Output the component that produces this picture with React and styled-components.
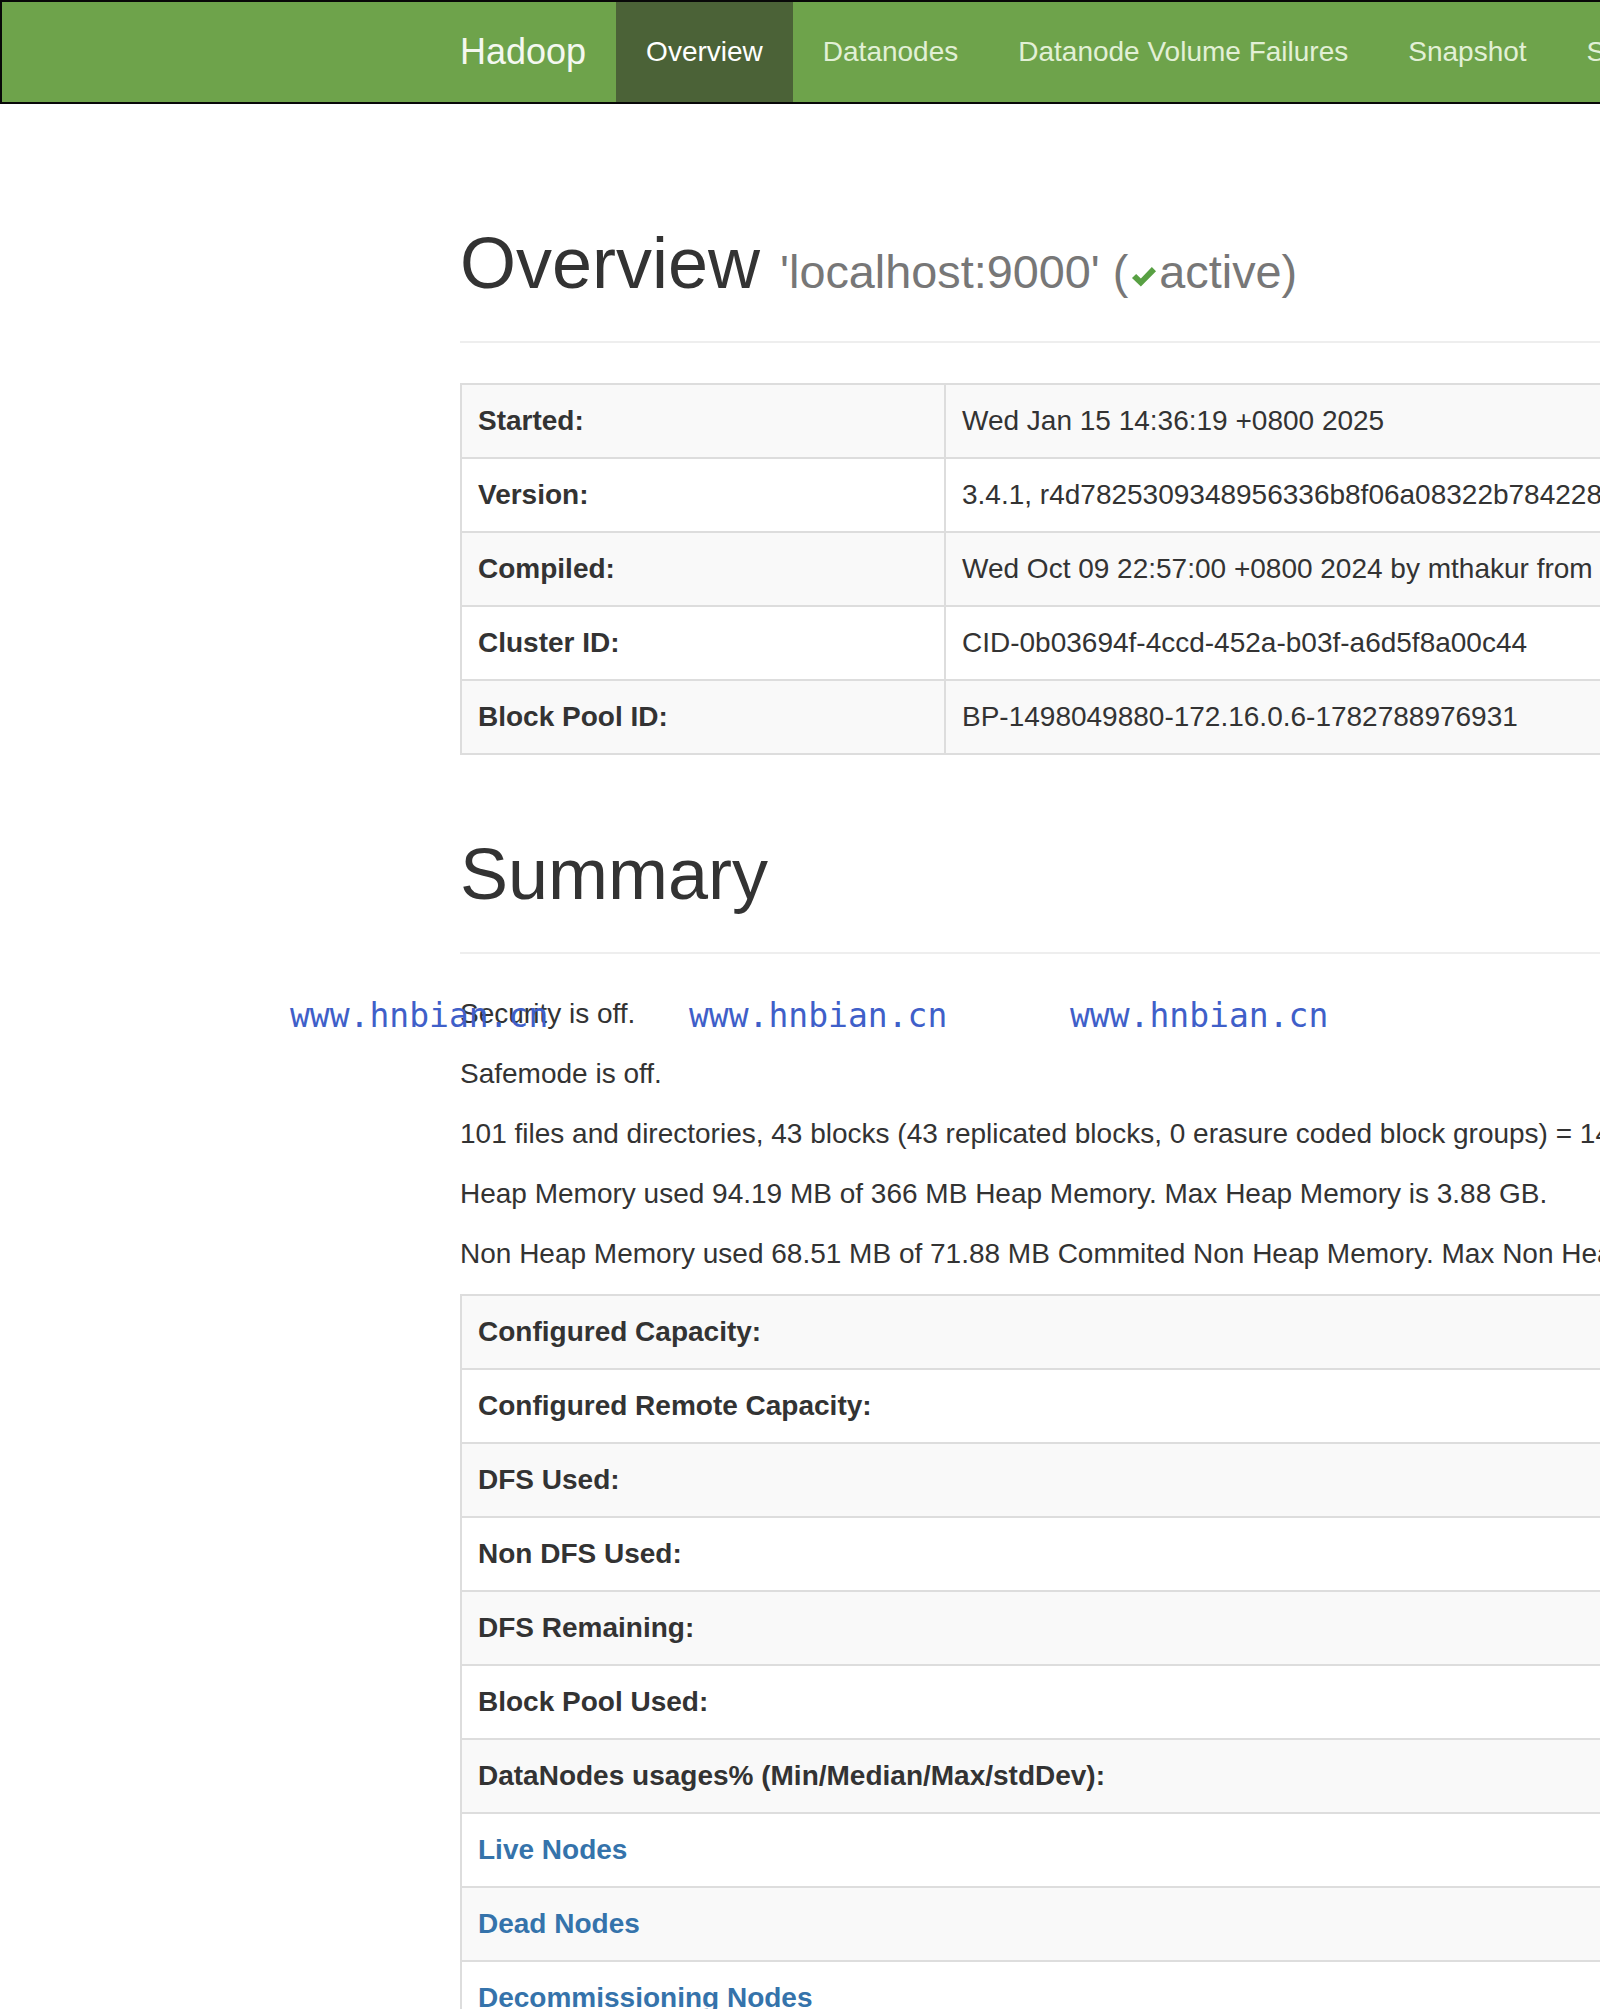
import React from "react";
import styled, { createGlobalStyle } from "styled-components";

const GlobalStyle = createGlobalStyle`
  html, body {
    margin: 0;
    padding: 0;
    background: #fff;
    overflow: hidden;
  }
  body {
    font-family: "Liberation Sans", Helvetica, Arial, sans-serif;
    font-size: 28px;
    line-height: 40px;
    color: #333;
  }
  * {
    box-sizing: border-box;
  }
`;

const navItems = [
  "Overview",
  "Datanodes",
  "Datanode Volume Failures",
  "Snapshot",
  "Startup Progress",
  "Utilities",
];

const overviewRows = [
  ["Started:", "Wed Jan 15 14:36:19 +0800 2025"],
  ["Version:", "3.4.1, r4d7825309348956336b8f06a08322b78422849b1"],
  ["Compiled:", "Wed Oct 09 22:57:00 +0800 2024 by mthakur from branch-3.4.1"],
  ["Cluster ID:", "CID-0b03694f-4ccd-452a-b03f-a6d5f8a00c44"],
  ["Block Pool ID:", "BP-1498049880-172.16.0.6-1782788976931"],
];

const summaryLines = [
  "Security is off.",
  "Safemode is off.",
  "101 files and directories, 43 blocks (43 replicated blocks, 0 erasure coded block groups) = 144 total filesystem object(s).",
  "Heap Memory used 94.19 MB of 366 MB Heap Memory. Max Heap Memory is 3.88 GB.",
  "Non Heap Memory used 68.51 MB of 71.88 MB Commited Non Heap Memory. Max Non Heap Memory is <unbounded>.",
];

const summaryRows = [
  { label: "Configured Capacity:" },
  { label: "Configured Remote Capacity:" },
  { label: "DFS Used:" },
  { label: "Non DFS Used:" },
  { label: "DFS Remaining:" },
  { label: "Block Pool Used:" },
  { label: "DataNodes usages% (Min/Median/Max/stdDev):" },
  { label: "Live Nodes", link: true },
  { label: "Dead Nodes", link: true },
  { label: "Decommissioning Nodes", link: true },
  { label: "Entering Maintenance Nodes", link: true },
];

const watermarks = [290, 689, 1070];

const Page = styled.div`
  position: relative;
  width: 1600px;
  height: 2009px;
  overflow: hidden;
`;

const Navbar = styled.header`
  width: 100%;
  background-color: #6ea34b;
  border: 2px solid #080808;
  border-right: none;
  margin-bottom: 40px;
`;

const Container = styled.div`
  display: flow-root;
  width: 2340px;
  margin-left: ${(p) => (p.$nav ? 428 : 430)}px;
  padding: 0 30px;
`;

const NavRow = styled.nav`
  display: flex;
  height: 100px;
`;

const Brand = styled.a`
  margin-left: -30px;
  padding: 30px;
  font-size: 36px;
  line-height: 40px;
  color: #f4f8f0;
  text-decoration: none;
  white-space: nowrap;
`;

const NavLink = styled.a`
  padding: 30px;
  font-size: 28px;
  line-height: 40px;
  white-space: nowrap;
  text-decoration: none;
  color: ${(p) => (p.$active ? "#ffffff" : "#e2f0d6")};
  background-color: ${(p) => (p.$active ? "#4b6237" : "transparent")};
`;

const PageHeader = styled.div`
  margin: 80px 0 40px;
  padding-bottom: 18px;
  border-bottom: 2px solid #eee;
`;

const Title = styled.h1`
  margin: 0 0 20px;
  font-size: 72px;
  line-height: 1.1;
  font-weight: 500;
  color: #333;
`;

const Subtitle = styled.small`
  font-size: 65%;
  line-height: 1;
  font-weight: 400;
  color: #777;
`;

const Check = styled.svg`
  width: 28px;
  height: 23px;
  margin: 0 1px 0 2px;
  vertical-align: 0;
`;

const Table = styled.table`
  width: 2280px;
  border-collapse: collapse;
  border: 2px solid #ddd;
  margin-bottom: 40px;

  tr:nth-of-type(odd) {
    background-color: #f9f9f9;
  }
`;

const Th = styled.th`
  width: ${(p) => p.$w}px;
  padding: 16px;
  border: 2px solid #ddd;
  text-align: left;
  font-weight: bold;
  line-height: 40px;
  vertical-align: top;
  white-space: nowrap;
`;

const Td = styled.td`
  padding: 16px;
  border: 2px solid #ddd;
  line-height: 40px;
  vertical-align: top;
  white-space: nowrap;
`;

const RowLink = styled.a`
  color: #3573ab;
  text-decoration: none;
`;

const Para = styled.p`
  margin: 0 0 20px;
  white-space: nowrap;
`;

const Watermark = styled.span`
  position: absolute;
  top: 996px;
  left: ${(p) => p.$x}px;
  font-family: "DejaVu Sans Mono", "Liberation Mono", monospace;
  font-size: 33px;
  line-height: normal;
  color: #3f5fc9;
  white-space: nowrap;
  pointer-events: none;
`;

const App = () => {
  return (
    <Page>
      <GlobalStyle />
      <Navbar>
        <Container $nav>
          <NavRow>
            <Brand href="#">Hadoop</Brand>
            {navItems.map((item) => (
              <NavLink key={item} href="#" $active={item === "Overview"}>
                {item}
              </NavLink>
            ))}
          </NavRow>
        </Container>
      </Navbar>

      <Container>
        <PageHeader>
          <Title>
            Overview{" "}
            <Subtitle>
              'localhost:9000' (
              <Check viewBox="0 0 26 22">
                <path
                  d="M1.5 12.5 L5.5 8.5 L10 13 L20.5 2 L24.5 6 L10 20.5 Z"
                  fill="#58a043"
                />
              </Check>
              active)
            </Subtitle>
          </Title>
        </PageHeader>

        <Table>
          <tbody>
            {overviewRows.map(([label, value]) => (
              <tr key={label}>
                <Th $w={484}>{label}</Th>
                <Td>{value}</Td>
              </tr>
            ))}
          </tbody>
        </Table>

        <PageHeader>
          <Title>Summary</Title>
        </PageHeader>

        {summaryLines.map((line) => (
          <Para key={line}>{line}</Para>
        ))}

        <Table>
          <tbody>
            {summaryRows.map((row) => (
              <tr key={row.label}>
                <Th $w={1400}>
                  {row.link ? <RowLink href="#">{row.label}</RowLink> : row.label}
                </Th>
                <Td />
              </tr>
            ))}
          </tbody>
        </Table>
      </Container>

      {watermarks.map((x) => (
        <Watermark key={x} $x={x}>
          www.hnbian.cn
        </Watermark>
      ))}
    </Page>
  );
};

export default App;
